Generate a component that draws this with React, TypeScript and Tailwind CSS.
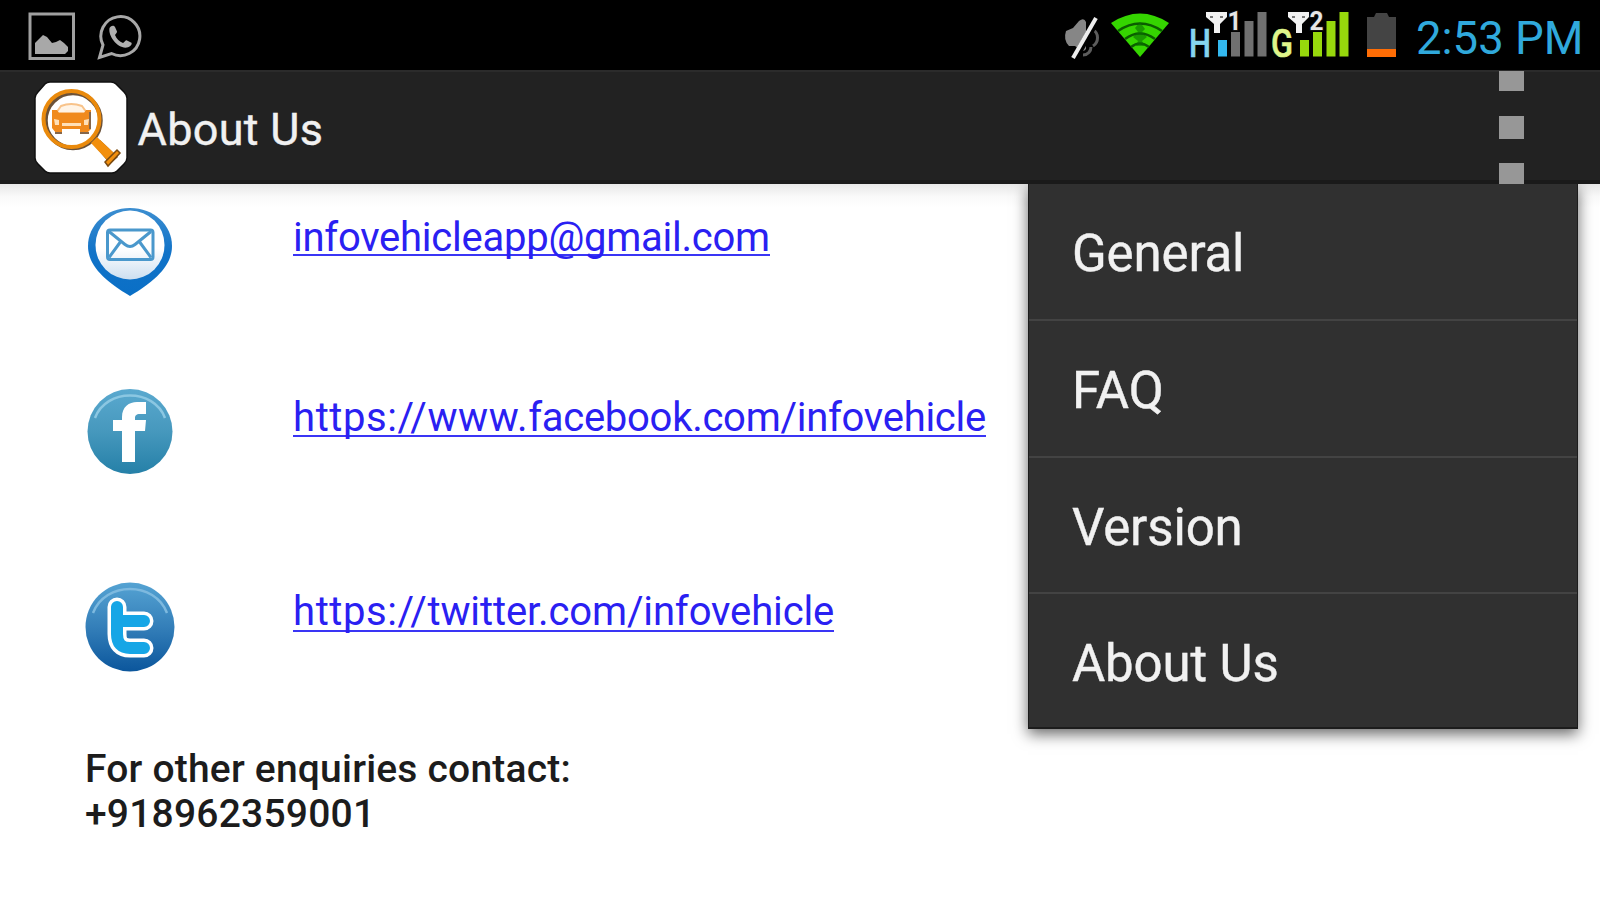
import React from 'react';

const menuItems = [
  { label: 'General', height: 'h-[137px]' },
  { label: 'FAQ', height: 'h-[137px]' },
  { label: 'Version', height: 'h-[136px]' },
  { label: 'About Us', height: 'h-[135px]' },
];

const PictureIcon = () => (
  <svg width="48" height="48" viewBox="0 0 48 48" className="shrink-0">
    <rect x="2" y="2" width="43.5" height="44.5" fill="none" stroke="#a0a0a0" strokeWidth="3" />
    <path d="M7 42V31l4-4 4-4 4 2 5 6 4-1 4-2 4 3 4 4v4l-3 3z" fill="#a8a8a8" />
  </svg>
);

const WhatsAppIcon = () => (
  <svg width="46" height="46" viewBox="0 0 46 46" className="shrink-0">
    <path d="M2.500 43.500l3.500-12.500a19.500 19.500 0 1 1 8.500 8.500z" fill="none" stroke="#a8a8a8" strokeWidth="3" />
    <path d="M12.500 14c2-3.500 5-2.500 5.500-1l2 4.500c.3 1-2 3-2 3.500 1.500 4 4.500 6.500 8 8 1 0 2-3 3.500-2.800l5 2.500c1 2-2.500 5-6 5C20 33.500 11 22 12.500 14z" fill="#b0b0b0" />
  </svg>
);

const MuteIcon = () => (
  <svg width="40" height="46" viewBox="0 0 40 46" className="shrink-0">
    <path d="M3 16l7-3 6-7q5-4 7 1v27q-3 4-7 0l-4-3H6q-6-6-3-15z" fill="#868686" />
    <path d="M30 15c6 3 6 12 0 16M20 40c5 0 8-4 8-8" fill="none" stroke="#5c5c5c" strokeWidth="3" />
    <path d="M12 43L35 3" stroke="#000" strokeWidth="7" />
    <path d="M10 43L33 3" stroke="#ededed" strokeWidth="4" />
  </svg>
);

const WifiIcon = () => (
  <svg width="60" height="46" viewBox="0 0 60 46" className="shrink-0">
    <path d="M1 12Q30-7 59 12L30 46z" fill="#35d500" />
    <path d="M8 20Q30 5 52 20M15 28Q30 17 45 28M21 36Q30 29 39 36" fill="none" stroke="#0b5d00" strokeWidth="2.500" />
    <path d="M30 11l5 7-3 3 5 5-5 4 3 5h-9l2-5-5-4 5-5-3-4z" fill="#087000" opacity=".6" />
  </svg>
);

interface SignalProps {
  network: string;
  slot: string;
  letterColor: string;
  bars: string[];
}

const Signal = ({ network, slot, letterColor, bars }: SignalProps) => (
  <svg width="78" height="48" viewBox="0 0 78 48" className="shrink-0 overflow-visible">
    <text x="-1" y="45.500" fontSize="38" fontWeight="500" fill={letterColor} stroke={letterColor} strokeWidth=".6" textLength="22" lengthAdjust="spacingAndGlyphs">{network}</text>
    <rect x="28" y="29" width="9" height="16.500" fill={bars[0]} />
    <rect x="41" y="21" width="9" height="24.500" fill={bars[1]} />
    <rect x="54.500" y="10" width="9" height="35.500" fill={bars[2]} />
    <rect x="67.500" y="1" width="9" height="44.500" fill={bars[3]} />
    <path d="M16 1h21v5l-7 7v9h-6v-9l-8-7z" fill="#f2f2f2" />
    <path d="M20 5h3v2h-3zM30 5h3v2h-3z" fill="#777" />
    <text x="37.500" y="18.500" fontSize="25" fontWeight="700" fill="#e6e6e6" stroke="#111" strokeWidth="2" paintOrder="stroke" textLength="14" lengthAdjust="spacingAndGlyphs">{slot}</text>
  </svg>
);

const BatteryIcon = () => (
  <svg width="29" height="45" viewBox="0 0 29 45" className="shrink-0">
    <path d="M0 4h7l2-4h11l2 4h7v33H0z" fill="#444" />
    <rect y="36" width="29" height="8" fill="#ff6d05" />
  </svg>
);

const AppLogo = () => (
  <svg width="94" height="94" viewBox="0 0 94 94" className="shrink-0">
    <path d="M16 1h61q3 0 5 2l8 8q3 3 3 6v60q0 3-3 6l-7 7q-2 2-5 2H16q-3 0-5-2l-7-7q-3-3-3-6V17q0-3 3-6l7-8q2-2 5-2z" fill="#fff" stroke="#101010" strokeWidth="1.500" />
    <g fill="none">
      <circle cx="39" cy="39.500" r="27.500" stroke="#6b5138" strokeWidth="4.500" />
      <circle cx="37.500" cy="38" r="28" stroke="#ea8a0c" strokeWidth="4" />
    </g>
    <path d="M60 64l6-5 18 17-8 7z" fill="#6a4a24" />
    <path d="M57 62l6-6 17 16-7 7z" fill="#f28f0d" />
    <path d="M71 81l12-12 3 3-12 13z" fill="#f28f0d" stroke="#7a4a10" strokeWidth="1.500" />
    <path d="M22 32l5-7q10-4 21 0l5 7z" fill="#fff4e6" stroke="#f8c38a" strokeWidth="2" />
    <path d="M18 29h5l2 3h25l2-3h5v19l-4 4h-7v-4H28v4h-6l-4-5z" fill="#f08a1d" />
    <path d="M20 38l5 1v5h-4zM55 38l-5 1v5h4zM28 42h19v3H28z" fill="#ffe0b8" />
    <path d="M21 52h7M46 52h9M56 31v17" stroke="#85664a" strokeWidth="2" />
  </svg>
);

const MailPin = () => (
  <svg width="86" height="90" viewBox="0 0 86 90" className="shrink-0">
    <defs>
      <linearGradient id="mailFill" x1="0" y1="0" x2="0" y2="1">
        <stop offset=".55" stopColor="#fff" />
        <stop offset="1" stopColor="#cddff0" />
      </linearGradient>
      <linearGradient id="pinFill" x1="0" y1="0" x2="0" y2="1">
        <stop offset="0" stopColor="#3c8ed0" />
        <stop offset=".5" stopColor="#1173c8" />
        <stop offset="1" stopColor="#0a6fc6" />
      </linearGradient>
    </defs>
    <path d="M43 1C67 1 85 18 85 39c0 20-17 35-42 50C18 74 1 59 1 39 1 18 19 1 43 1z" fill="url(#pinFill)" />
    <circle cx="43" cy="38" r="34.500" fill="url(#mailFill)" />
    <g fill="none" stroke="#4a98cc" strokeWidth="3">
      <rect x="20.500" y="23" width="45.500" height="29.500" rx="2.500" />
      <path d="M22 24.500l16 13q5 4 10 0l16-13M22 50.500l11-15M64 50.500L53 35.500" />
    </g>
  </svg>
);

const FacebookBadge = () => (
  <svg width="86" height="88" viewBox="0 0 86 88" className="shrink-0">
    <defs>
      <linearGradient id="fbFill" x1="0" y1="0" x2="0" y2="1">
        <stop offset="0" stopColor="#5aa9cf" />
        <stop offset=".5" stopColor="#4698bd" />
        <stop offset="1" stopColor="#2580a8" />
      </linearGradient>
    </defs>
    <circle cx="43" cy="44.500" r="42.500" fill="url(#fbFill)" />
    <path d="M8 31C19 1 67 1 78 31" fill="none" stroke="#8bc7e2" strokeWidth="2.500" />
    <path d="M35 75V44h-9V33h9v-3c0-10 7-15 15-15h9v12h-6c-4 0-5 2-5 4v2h11l-1 11H48v31z" fill="#fff" />
  </svg>
);

const TwitterBadge = () => (
  <svg width="90" height="92" viewBox="0 0 90 92" className="shrink-0">
    <defs>
      <linearGradient id="twFill" x1="0" y1="0" x2="0" y2="1">
        <stop offset="0" stopColor="#55a3d3" />
        <stop offset=".5" stopColor="#347fb9" />
        <stop offset="1" stopColor="#0b569c" />
      </linearGradient>
    </defs>
    <circle cx="45" cy="46" r="44.500" fill="url(#twFill)" />
    <path d="M8 32C20 0 70 0 82 32" fill="none" stroke="#7db9df" strokeWidth="2.500" />
    <g fill="none" strokeLinecap="round" strokeLinejoin="round">
      <path d="M32 26v27q0 14 13 14h14M32 40h27" stroke="#fff" strokeWidth="19" />
      <path d="M32 26v27q0 14 13 14h14M32 40h27" stroke="#16a6e6" strokeWidth="12" />
    </g>
  </svg>
);

const StatusBar = () => (
  <header className="flex h-[70px] items-start bg-black">
    <div className="flex gap-[21px] pt-3 pl-7">
      <PictureIcon />
      <div className="pt-0.5"><WhatsAppIcon /></div>
    </div>
    <div className="ml-auto flex items-start pt-[11px]">
      <div className="mr-[7px] pt-1"><MuteIcon /></div>
      <div className="mr-5"><WifiIcon /></div>
      <div className="mr-1"><Signal network="H" slot="1" letterColor="#86d5ee" bars={['#33b9f0', '#707070', '#707070', '#707070']} /></div>
      <div className="mr-[17px]"><Signal network="G" slot="2" letterColor="#dff58a" bars={['#97d80c', '#97d80c', '#97d80c', '#97d80c']} /></div>
      <div className="mt-0.5"><BatteryIcon /></div>
      <span className="ml-5 w-[184px] whitespace-nowrap text-[45.500px] leading-[56px] text-[#30a9dc]">2:53 PM</span>
    </div>
  </header>
);

const ActionBar = () => (
  <div className="flex h-[114px] items-center border-t-2 border-b-4 border-t-[#2b2b2b] border-b-[#1a1a1a] bg-[#222] pl-[34px]">
    <div className="pt-1"><AppLogo /></div>
    <h1 className="ml-[9.5px] pt-1.5 text-[45px] leading-none tracking-[0.3px] text-[#f1f1f1] [-webkit-text-stroke:0.4px]">About Us</h1>
    <button className="-my-1 mr-[76px] ml-auto flex h-[116px] flex-col justify-between pt-[3px]" aria-label="More options">
      <span className="h-5 w-[25px] bg-[#979797]" />
      <span className="h-[23px] w-[25px] bg-[#979797]" />
      <span className="h-[21px] w-[25px] bg-[#979797]" />
    </button>
  </div>
);

const OverflowMenu = () => (
  <nav className="absolute top-[184px] left-[1028px] h-[545px] w-[550px] border-x border-b-2 border-[#1c1c1c] bg-[#303030] shadow-[0_5px_14px_rgba(0,0,0,0.6)] [clip-path:inset(0_-30px_-30px_-30px)]">
    {menuItems.map((item, i) => (
      <div
        key={item.label}
        className={`${item.height} flex items-center pt-1.5 pl-[43px] text-[51px] tracking-[-0.15px] text-[#f1f1f1] [-webkit-text-stroke:0.4px] ${i < menuItems.length - 1 ? 'border-b-2 border-[#434343]' : ''}`}
      >
        {item.label}
      </div>
    ))}
  </nav>
);

// taller line than box, so descenders run through the underline
const linkClass = 'h-10 border-b-2 border-[#3a35f5] whitespace-nowrap text-[40px] text-[#2a20f2]';

export default function App() {
  return (
    <div className="relative h-[900px] w-[1600px] overflow-hidden bg-white font-['Roboto',sans-serif]">
      <StatusBar />
      <ActionBar />
      <main className="h-[716px] bg-[linear-gradient(#e6e6e6,#f9f9f9_12px,#fff_24px)] pt-[23px] pl-[85px]">
        <div className="flex h-[180px] items-start pl-0.5">
          <MailPin />
          <a className={`${linkClass} mt-[9px] ml-[120px] leading-[43px] tracking-[-0.25px]`}>infovehicleapp@gmail.com</a>
        </div>
        <div className="flex h-[194px] items-start pl-0.5">
          <FacebookBadge />
          <a className={`${linkClass} mt-[10px] ml-[120px] leading-[41px] tracking-[-0.27px]`}>
            <span className="tracking-[0.6px]">https://www.</span>facebook.com/infovehicle
          </a>
        </div>
        <div className="flex h-[166px] items-start">
          <TwitterBadge />
          <a className={`${linkClass} mt-[11px] ml-[118px] leading-[40px] tracking-[-0.12px]`}>
            <span className="tracking-[0.6px]">https://</span>twitter.com/infovehicle
          </a>
        </div>
        <p className="text-[39px] leading-[45px] font-medium tracking-[0.2px] text-[#1c1c1c]">
          For other enquiries contact:
          <br />
          +918962359001
        </p>
      </main>
      <OverflowMenu />
    </div>
  );
}
